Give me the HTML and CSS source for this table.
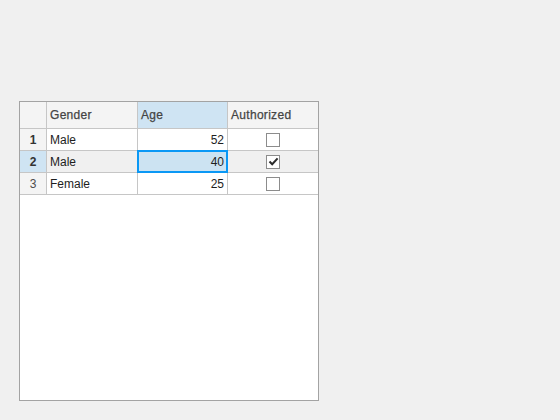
FILE: index.html
```html
<!DOCTYPE html>
<html>
<head>
<meta charset="utf-8">
<link rel="stylesheet" href="styles.css">
</head>
<body>
<div class="table">
  <div class="grid">
    <div class="hd corner"></div>
    <div class="hd">Gender</div>
    <div class="hd hd-sel">Age</div>
    <div class="hd">Authorized</div>

    <div class="rh bold">1</div>
    <div class="c">Male</div>
    <div class="c num">52</div>
    <div class="c chk"><span class="box"></span></div>

    <div class="rh rh-sel bold">2</div>
    <div class="c row-sel">Male</div>
    <div class="c num cell-sel">40</div>
    <div class="c chk row-sel"><span class="box"><svg width="11" height="11" viewBox="0 0 11 11"><path d="M1.5 5.5 L4.2 8.3 L9.6 2.4" fill="none" stroke="#2b2b2b" stroke-width="2"/></svg></span></div>

    <div class="rh">3</div>
    <div class="c">Female</div>
    <div class="c num">25</div>
    <div class="c chk"><span class="box"></span></div>
  </div>
</div>
</body>
</html>
```
FILE: styles.css
```css
html, body {
  margin: 0;
  padding: 0;
  background: #f0f0f0;
}
body {
  padding: 101px 0 0 19px;
  font-family: "Liberation Sans", Arial, sans-serif;
  font-size: 12px;
  color: #1e1e1e;
}
.table {
  width: 298px;
  height: 298px;
  border: 1px solid #a3a3a3;
  background: #ffffff;
}
.grid {
  display: grid;
  grid-template-columns: 26px 90px 89px 90px;
  grid-template-rows: 26px 21px 21px 21px;
  gap: 1px;
  background: #c6c6c6;
  border-bottom: 1px solid #c6c6c6;
}
.grid > div {
  display: flex;
  align-items: center;
  white-space: nowrap;
}
.hd {
  background: #f4f4f4;
  color: #444444;
  letter-spacing: 0.3px;
  -webkit-text-stroke: 0.25px #444444;
  padding-left: 3px;
}
.hd.corner { padding: 0; }
.hd-sel { background: #cfe4f3; }
.rh {
  background: #f4f4f4;
  justify-content: center;
  color: #4d4d4d;
}
.rh.bold { font-weight: bold; color: #333; }
.rh-sel { background: #cfe4f3; }
.c {
  background: #ffffff;
  padding-left: 3px;
}
.c.num {
  justify-content: flex-end;
  padding: 0 3px 0 0;
}
.c.chk {
  justify-content: center;
  padding: 0;
}
.row-sel { background: #f0f0f0 !important; }
.cell-sel {
  background: #cce3f2 !important;
  position: relative;
}
.cell-sel::after {
  content: "";
  position: absolute;
  left: -1px;
  top: -1px;
  right: -1px;
  bottom: -1px;
  border: 2px solid #0a98f5;
}
.box {
  width: 14px;
  height: 14px;
  box-sizing: border-box;
  border: 1px solid #8c8c8c;
  background: #ffffff;
  display: flex;
  align-items: center;
  justify-content: center;
}
.box svg { display: block; }
```
